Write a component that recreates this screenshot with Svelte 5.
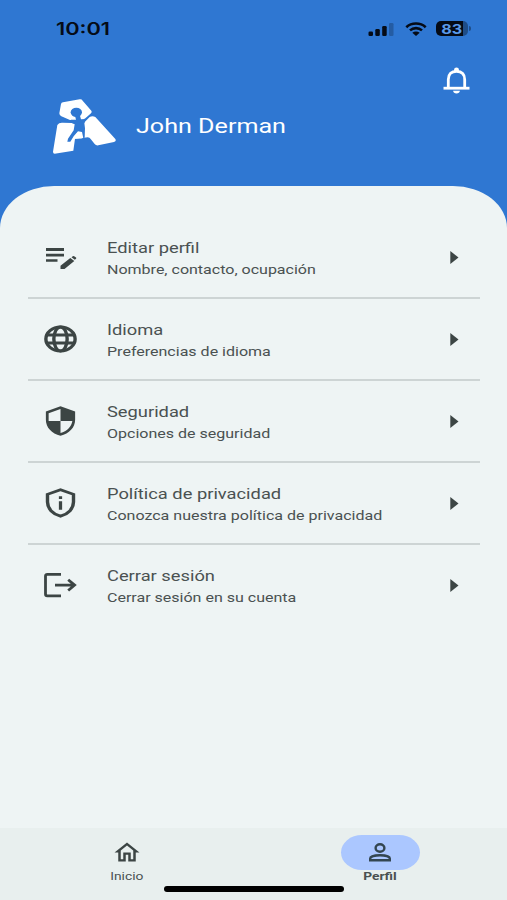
<script lang="ts">
  type Item = { icon: string; title: string; detail: string };

  const items: Item[] = [
    { icon: 'edit', title: 'Editar perfil', detail: 'Nombre, contacto, ocupación' },
    { icon: 'globe', title: 'Idioma', detail: 'Preferencias de idioma' },
    { icon: 'security', title: 'Seguridad', detail: 'Opciones de seguridad' },
    { icon: 'privacy', title: 'Política de privacidad', detail: 'Conozca nuestra política de privacidad' },
    { icon: 'logout', title: 'Cerrar sesión', detail: 'Cerrar sesión en su cuenta' },
  ];

  let active = $state('perfil');
</script>

<div class="screen">
  <div class="status-bar">
    <span class="time">10:01</span>
    <div class="status-icons">
      <svg class="signal" viewBox="0 0 26 14" width="26" height="14">
        <rect x="0.5" y="9.500" width="4.500" height="4.500" rx="1.300" />
        <rect x="7.300" y="7" width="4.500" height="7" rx="1.300" />
        <rect x="14.200" y="4" width="4.500" height="10" rx="1.300" />
        <rect x="21" y="1" width="4.500" height="13" rx="1.300" opacity="0.25" />
      </svg>
      <svg class="wifi" viewBox="0 0 22 14" width="22" height="14">
        <path d="M1.300 5.200C6.600 0.300 15.400 0.300 20.700 5.200" />
        <path d="M5 8.400c3.400-3 8.600-3 12 0" />
        <path class="dot" d="M7.300 10.700c2.200-1.700 5.200-1.700 7.400 0L11 14z" />
      </svg>
      <div class="battery">
        <div class="charge"><span>83</span></div>
        <div class="cap"></div>
      </div>
    </div>
  </div>

  <header>
    <button class="bell" aria-label="Notificaciones">
      <svg viewBox="0 0 27 27" width="27" height="27">
        <path d="M5.300 20.500V12.500C5.300 7 8.500 4.300 13.500 4.300S21.700 7 21.700 12.500V20.500" />
        <path d="M0.500 21.200H26.500" />
        <path class="solid" d="M11.100 4.500V2.500a2.400 2.100 0 0 1 4.800 0V4.500zM10.100 23.700h6.800c-.2 1.700-1.500 2.800-3.400 2.800s-3.200-1.100-3.400-2.800z" />
      </svg>
    </button>
    <div class="profile">
      <svg class="logo" viewBox="68 42 189 165" width="63" height="55">
        <path d="M92 57Q93 53 98 52L148 43Q154 42 157 47L183 77Q186 81 182 85L165 100Q158 106 150 105L119 105L93 94Q87 91 87 85Z" />
        <path d="M81 120Q86 112 97 113L124 114L150 120L158 159L134 161L129 197L73 206Q68 206 68 200Z" />
        <path d="M164 110L178 96Q186 91 195 96L255 162Q259 168 251 171L204 181Q197 182 193 177L181 162Q178 157 172 157L150 160L152 130Z" />
        <g class="figure">
          <ellipse cx="138" cy="82" rx="17" ry="14" />
          <path d="M134 92H149L152 103L165 103L162 114L164 130L163 158L159 160L155 141L143 139L130 154L120 170L111 170L113 161L130 136L133 118L120 112L122 104L137 104Z" />
          <path class="fill" d="M141 143L154 143L156 160L134 161L132 155Z" />
        </g>
      </svg>
      <span class="name">John Derman</span>
    </div>
  </header>

  <main>
    {#each items as item (item.icon)}
      <button class="row">
        <svg class="icon" viewBox={item.icon === 'edit' || item.icon === 'logout' ? '0 0 39 32' : '0 0 24 24'} width="39" height="32" preserveAspectRatio="none">
          {#if item.icon === 'edit'}
            <path d="M5 7.100h18v2.800H5zM5 12.800h18v2.800H5zM5 18.200h11.500v2.600H5z" />
            <path d="M19.500 28v-3.200L29.300 17.100l4 3L23.500 28zM30.500 16.200l1.300-1q.7-.5 1.400 0l1.800 1.400q.7.600 0 1.100l-1.200 1z" />
          {:else if item.icon === 'globe'}
            <g class="line">
              <circle cx="12" cy="12" r="9" />
              <ellipse cx="12" cy="12" rx="4.100" ry="9" />
              <path d="M3.500 9h17M3.500 15h17" />
            </g>
          {:else if item.icon === 'security'}
            <path fill-rule="evenodd" d="M12 1L3 4.800v6.200c0 5.700 3.600 10.500 9 12 5.400-1.500 9-6.300 9-12V4.800zM12 12h7.300c-.5 4.300-3.300 7.600-7.300 9zM12 12H4.700V6.100L12 3z" />
          {:else if item.icon === 'privacy'}
            <path class="line" d="M12 2.100L4 5.500v5.800c0 4.900 3.200 9 8 10.600 4.800-1.600 8-5.700 8-10.600V5.500z" />
            <path d="M11 7h2v2h-2zM11 10.700h2v6.300h-2z" />
          {:else}
            <path class="stroke" d="M20 5.300H6.300Q4.500 5.300 4.500 7V25Q4.500 26.800 6.300 26.800H20M14 16.100H33.500M27.200 10.700L33.600 16.100L27.200 21.500" />
          {/if}
        </svg>
        <span class="text">
          <span class="title">{item.title}</span>
          <span class="detail">{item.detail}</span>
        </span>
        <svg class="arrow" viewBox="0 0 9 13" width="9" height="13"><path d="M0.300 0L8.500 6.500L0.300 13z" /></svg>
      </button>
    {/each}
  </main>

  <nav>
    <button class="tab" class:active={active === 'inicio'} onclick={() => (active = 'inicio')}>
      <span class="pill">
        <svg viewBox="0 0 24 24" width="30" height="27" preserveAspectRatio="none">
          <path d="M12 5.690l5 4.500V18h-2v-6H9v6H7v-7.810l5-4.500M12 3L2 12h3v8h6v-6h2v6h6v-8h3L12 3z" />
        </svg>
      </span>
      <span class="label">Inicio</span>
    </button>
    <button class="tab" class:active={active === 'perfil'} onclick={() => (active = 'perfil')}>
      <span class="pill">
        <svg class="person" viewBox="0 0 22 19" width="22" height="19">
          <ellipse cx="11" cy="5" rx="4.400" ry="3.700" />
          <path d="M1.200 17.200V15.500C1.200 13.500 6 12.200 11 12.200S20.800 13.500 20.800 15.500V17.200Z" />
        </svg>
      </span>
      <span class="label">Perfil</span>
    </button>
    <div class="home-indicator"></div>
  </nav>
</div>

<style>
  :global(body) {
    margin: 0;
  }

  .screen {
    width: 507px;
    height: 900px;
    display: flex;
    flex-direction: column;
    overflow: hidden;
    background: #2f77d2;
    font-family: Roboto, sans-serif;
    color: #4a5151;
  }

  button {
    border: 0;
    padding: 0;
    margin: 0;
    background: none;
    font: inherit;
    color: inherit;
    cursor: pointer;
  }

  svg {
    display: block;
    flex: none;
  }

  .status-bar {
    height: 57px;
    flex: none;
    box-sizing: border-box;
    padding: 0 36px 0 56px;
    display: flex;
    align-items: center;
    justify-content: space-between;
    color: #050b16;
  }

  .time {
    font-family: Inter, sans-serif;
    font-size: 17px;
    font-weight: 600;
    transform: scaleX(1.28);
    transform-origin: left;
  }

  .status-icons {
    display: flex;
    align-items: center;
    fill: #050b16;
  }

  .signal {
    margin-right: 1px;
  }

  .wifi {
    margin: 0 9px 0 10px;
    fill: none;
    stroke: #050b16;
    stroke-width: 2.6;
  }

  .wifi .dot {
    fill: #050b16;
    stroke: none;
  }

  .battery {
    display: flex;
    align-items: center;
    gap: 1px;
  }

  .charge {
    width: 32px;
    height: 15px;
    border-radius: 5px;
    background: linear-gradient(to right, #050b16 84%, #1e4d88 84%);
    display: flex;
    align-items: center;
    justify-content: center;
    color: #5a9aea;
    font-family: Inter, sans-serif;
    font-size: 13.5px;
    font-weight: 700;
  }

  .charge span {
    transform: scaleX(1.2);
  }

  .cap {
    width: 2px;
    height: 5px;
    border-radius: 0 2px 2px 0;
    background: #1e4d88;
  }

  header {
    height: 129px;
    flex: none;
    display: flex;
    flex-direction: column;
  }

  .bell {
    align-self: flex-end;
    margin: 10px 37px 0 0;
  }

  .bell svg {
    fill: none;
    stroke: #fff;
    stroke-width: 2.8;
  }

  .bell .solid {
    fill: #fff;
    stroke: none;
  }

  .profile {
    display: flex;
    align-items: center;
    gap: 20px;
    margin: 5px 0 0 53px;
    color: #fff;
  }

  .logo {
    fill: #fff;
  }

  .logo .figure {
    fill: #2f77d2;
  }

  .logo .fill {
    fill: #fff;
  }

  .name {
    margin-bottom: 1px;
    font-size: 20.5px;
    transform: scaleX(1.225);
    transform-origin: left;
  }

  main {
    flex: 1;
    box-sizing: border-box;
    padding: 31px 27px 0 28px;
    border-radius: 54px 54px 0 0 / 42px 42px 0 0;
    background: #eef4f4;
  }

  .row {
    width: 100%;
    height: 82px;
    display: flex;
    align-items: center;
    box-sizing: border-box;
    padding: 0 21px 0 13px;
    border-top: 1px solid transparent;
    border-bottom: 2px solid #cdd4d4;
    text-align: left;
  }

  .row:last-child {
    border-bottom-color: transparent;
  }

  .icon,
  .arrow {
    fill: #3c4544;
  }

  .icon {
    margin-bottom: 2px;
  }

  .icon .line {
    fill: none;
    stroke: #3c4544;
    stroke-width: 2.1;
  }

  .icon .stroke {
    fill: none;
    stroke: #3c4544;
    stroke-width: 2.8;
  }

  .text {
    flex: 1;
    margin-left: 27px;
    padding-top: 1px;
    display: flex;
    flex-direction: column;
    align-items: flex-start;
  }

  .title,
  .detail {
    transform: scaleX(1.22);
    transform-origin: left;
    white-space: nowrap;
  }

  .title {
    font-size: 15px;
    line-height: 22px;
  }

  .detail {
    font-size: 13px;
    line-height: 21px;
    transform: scaleX(1.232);
  }

  nav {
    position: relative;
    height: 72px;
    flex: none;
    display: flex;
    background: #e8efee;
  }

  .tab {
    flex: 1;
    display: flex;
    flex-direction: column;
    align-items: center;
    padding-top: 6.5px;
  }

  .pill {
    width: 79px;
    height: 35px;
    border-radius: 21px / 17.5px;
    display: flex;
    align-items: center;
    justify-content: center;
    fill: #3c4544;
  }

  .active .pill {
    background: #abc7ff;
  }

  .person {
    fill: none;
    stroke: #334650;
    stroke-width: 2.4;
  }

  .label {
    margin-top: -0.5px;
    font-size: 11.5px;
    line-height: 14px;
    transform: scaleX(1.2);
  }

  .active .label {
    font-weight: 700;
  }

  .home-indicator {
    position: absolute;
    left: 164px;
    bottom: 8px;
    width: 180px;
    height: 6px;
    border-radius: 3px;
    background: #000;
  }
</style>
